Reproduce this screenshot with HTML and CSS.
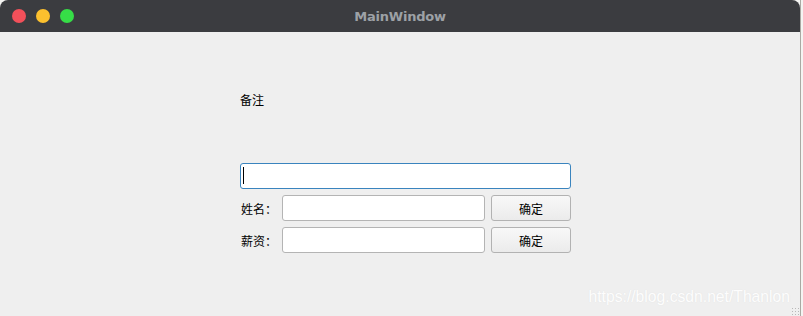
FILE: index.html
```html
<!DOCTYPE html>
<html lang="zh">
<head>
  <meta charset="UTF-8" />
  <title>MainWindow</title>
  <link rel="stylesheet" href="styles.css">
</head>
<body>
  <div class="window">
    <div class="titlebar">
      <div class="lights">
        <span class="light red"></span>
        <span class="light yellow"></span>
        <span class="light green"></span>
      </div>
      <div class="title">MainWindow</div>
      <div></div>
    </div>

    <div class="content">
      <div class="form">
        <div class="note">备注</div>

        <div class="line-edit focused"><span class="caret"></span></div>

        <div class="row">
          <label class="label">姓名：</label>
          <div class="line-edit"></div>
          <button class="btn">确定</button>
        </div>

        <div class="row">
          <label class="label">薪资：</label>
          <div class="line-edit"></div>
          <button class="btn">确定</button>
        </div>
      </div>

      <div class="watermark">https://blog.csdn.net/Thanlon</div>
      <div class="grip"></div>
    </div>
  </div>
</body>
</html>
```

FILE: styles.css
```css
body {
  margin: 0;
  background: #f4f4f2;
  font-family: "Noto Sans CJK SC", "Noto Sans", sans-serif;
  overflow: hidden;
}

.window {
  width: 800px;
  height: 316px;
  border-right: 1px solid #a9a9a3;
  display: flex;
  flex-direction: column;
}

.titlebar {
  height: 32px;
  background: #3b3c40;
  border-radius: 8px 8px 0 0;
  display: grid;
  grid-template-columns: 1fr auto 1fr;
  align-items: center;
}

.lights {
  display: flex;
  gap: 10px;
  padding-left: 12px;
}

.light {
  width: 14px;
  height: 14px;
  border-radius: 50%;
}

.red { background: #f2505a; }
.yellow { background: #fcc02e; }
.green { background: #36dd47; }

.title {
  color: #9da1a6;
  font-family: "DejaVu Sans", sans-serif;
  font-weight: 700;
  font-size: 13px;
  letter-spacing: -0.2px;
}

.content {
  flex: 1;
  background: #efefef;
  position: relative;
  padding: 60px 0 0 240px;
}

.form {
  width: 331px;
  display: flex;
  flex-direction: column;
  gap: 6px;
}

.note {
  font-size: 12px;
  line-height: 16px;
  color: #000;
  margin-bottom: 49px;
}

.row {
  display: flex;
  align-items: center;
  gap: 6px;
}

.label {
  display: block;
  flex-shrink: 0;
  width: 35px;
  padding-left: 1px;
  white-space: nowrap;
  font-size: 12px;
  color: #000;
}

.line-edit {
  height: 24px;
  border: 1px solid #b4b4b4;
  border-radius: 3px;
  background: #fff;
}

.row .line-edit {
  width: 201px;
  flex-shrink: 0;
}

.line-edit.focused {
  border-color: #3a84be;
  position: relative;
}

.caret {
  position: absolute;
  left: 2px;
  top: 3px;
  width: 1px;
  height: 17px;
  background: #000;
}

.btn {
  flex-shrink: 0;
  width: 80px;
  height: 26px;
  border: 1px solid #b2b2b2;
  border-radius: 3px;
  background: linear-gradient(#f8f8f8, #ebebeb);
  font-family: "Noto Sans CJK SC", sans-serif;
  font-size: 12px;
  color: #000;
  padding: 0;
}

.watermark {
  position: absolute;
  right: 10px;
  bottom: 10px;
  font-family: "Liberation Sans", Arial, sans-serif;
  font-size: 15.7px;
  color: #fdfdfd;
  text-shadow: 0 0 1px rgba(190, 190, 190, 0.3);
}

.grip {
  position: absolute;
  right: 1px;
  bottom: 1px;
  width: 8px;
  height: 8px;
  background-image: radial-gradient(#b8b8b8 0.8px, transparent 1px);
  background-size: 3px 3px;
}
```
